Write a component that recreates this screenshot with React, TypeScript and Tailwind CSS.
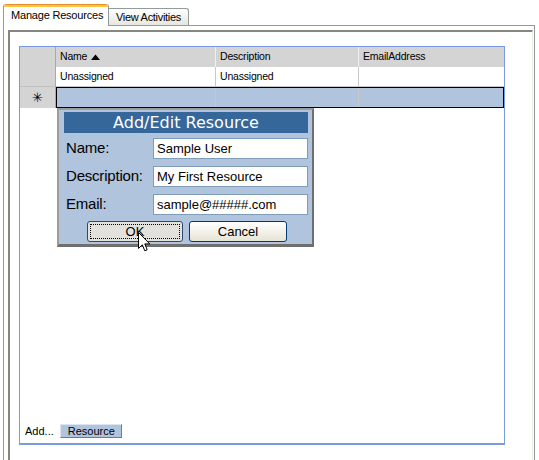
import React from "react";

const F = { fontFamily: '"Liberation Sans", Arial, sans-serif' };

export default function App() {
  return (
    <div className="relative w-[539px] h-[460px] overflow-hidden bg-white text-black" style={F}>
      {/* Tabs */}
      <div className="flex items-end h-[25px] pl-[3px]">
        <div className="relative z-10 h-[22px] w-[106px] mb-[-1px] bg-white border-l border-r border-[#919b9c] rounded-t-[3px] flex flex-col">
          <div className="h-[1px] bg-[#e68b2c] rounded-t-[3px] mx-[1px]" />
          <div className="h-[2px] bg-[#ffc73c]" />
          <div className="flex-1 flex items-center pl-[7px] text-[11px] tracking-[-0.2px] pb-[2px]">Manage Resources</div>
        </div>
        <div className="h-[17px] w-[80px] border-t border-r border-[#919b9c] rounded-tr-[3px] bg-gradient-to-b from-white to-[#e7e6de] flex items-center pl-[7px] text-[11px] tracking-[-0.3px]">
          View Activities
        </div>
      </div>
      {/* Panel */}
      <div className="ml-[3px] w-[532px] h-[440px] border-t border-l border-r border-[#919b9c] pl-[4px] pr-[1px] pt-[4px] bg-white">
        <div className="h-full border-t-2 border-l-2 border-[#88877f] border-r border-r-[#f1efe2] pl-[9px] pt-[14px]">
          <div className="w-[486px] h-[399px] border border-[#7a9ade] border-b-2 flex flex-col">
            {/* Grid */}
            <div className="text-[10.5px] tracking-[-0.2px]">
              <div className="flex h-[20px] bg-[#d4d4d4]">
                <div className="w-[36px] border-r border-[#a8a8a8]" />
                <div className="w-[160px] border-r border-[#f0f0f0] flex items-center pl-[4px] gap-[4px]">
                  <span>Name</span>
                  <svg width="9" height="6" viewBox="0 0 9 6"><path d="M0 6 L4.5 0.5 L9 6 Z" fill="#000" /></svg>
                </div>
                <div className="w-[143px] border-r border-[#f0f0f0] flex items-center pl-[4px]">Description</div>
                <div className="flex-1 flex items-center pl-[4px]">EmailAddress</div>
              </div>
              <div className="flex h-[20px]">
                <div className="w-[36px] bg-[#d4d4d4] border-r border-[#a8a8a8] border-b border-b-[#c0c0c0]" />
                <div className="w-[160px] border-r border-b border-[#c8c8c8] flex items-center pl-[4px]">Unassigned</div>
                <div className="w-[143px] border-r border-b border-[#c8c8c8] flex items-center pl-[4px]">Unassigned</div>
                <div className="flex-1 border-b border-[#c8c8c8]" />
              </div>
              <div className="flex h-[21px]">
                <div className="w-[36px] bg-[#d4d4d4] border-r border-[#a8a8a8] flex items-center justify-center text-[13px]">✳</div>
                <div className="flex-1 flex border border-black bg-[#b0c4de]">
                  <div className="w-[159px] border-r border-[#c8c8c8]" />
                  <div className="w-[143px] border-r border-[#c8c8c8]" />
                  <div className="flex-1" />
                </div>
              </div>
            </div>
            <div className="flex-1" />
            {/* Bottom bar */}
            <div className="flex items-center pl-[5px] pb-[4px] text-[11px]">
              <span>Add...</span>
              <div className="ml-[6px] h-[14px] w-[62px] bg-[#b0c4de] border-t border-l border-[#dde6f0] border-r border-b border-r-[#7a7a7a] border-b-[#7a7a7a] flex items-center pl-[7px]">
                Resource
              </div>
            </div>
          </div>
        </div>
      </div>

      {/* Popup */}
      <div className="absolute left-[57px] top-[108px] w-[257px] h-[139px] bg-[#b0c4de] border-2 border-[#9c9c9c] border-r-[#6f6f6f] border-b-[3px] border-b-[#6f6f6f] pl-[5px] pr-[4px] pt-[2px]">
        <div
          className="h-[21px] bg-[#35679a] text-white flex items-center justify-center text-[16px]"
          style={{ fontFamily: '"DejaVu Sans", Verdana, sans-serif' }}
        >
          Add/Edit Resource
        </div>
        <div className="mt-[5px] flex flex-col gap-[7px]">
          {[
            ["Name:", "Sample User"],
            ["Description:", "My First Resource"],
            ["Email:", "sample@#####.com"],
          ].map(([l, v]) => (
            <div key={l} className="flex items-center h-[21px]">
              <div className="w-[89px] pl-[2px] text-[15px] tracking-[-0.2px]">{l}</div>
              <div className="w-[155px] h-[21px] bg-white border border-[#7f9db9] flex items-center pl-[3px] text-[13px]">{v}</div>
            </div>
          ))}
        </div>
        <div className="mt-[6px] flex gap-[6px] pl-[23px]">
          <div className="w-[96px] h-[21px] rounded-[3px] border border-[#2b4a6e] bg-[#e2e1dc] p-[2px]">
            <div className="h-full border border-dotted border-black flex items-center justify-center text-[13px]">OK</div>
          </div>
          <div className="w-[98px] h-[21px] rounded-[3px] border border-[#003c74] bg-gradient-to-b from-white to-[#e6e3d6] flex items-center justify-center text-[13px]">
            Cancel
          </div>
        </div>
      </div>

      {/* Cursor */}
      <svg className="absolute left-[138px] top-[232px]" width="13" height="21" viewBox="0 0 13 21">
        <path d="M0.5 0.5 L0.5 16.5 L4.3 12.8 L6.8 18.8 L9.2 17.8 L6.8 11.9 L11.8 11.9 Z" fill="#fff" stroke="#000" strokeWidth="1" strokeLinejoin="miter" />
      </svg>
    </div>
  );
}
